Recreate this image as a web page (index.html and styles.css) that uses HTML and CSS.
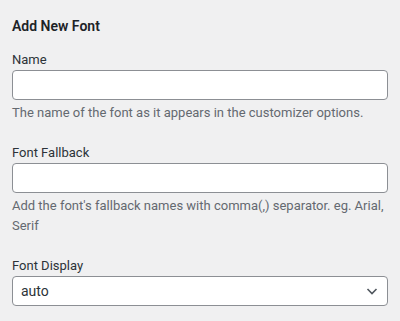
FILE: index.html
```html
<!DOCTYPE html>
<html>
    <head>
        <meta charset="utf-8" />
        <title>Add New Font</title>
        <link rel="stylesheet" href="styles.css">
    </head>
    <body>
        <div class="panel">
            <h3 class="panel-title">Add New Font</h3>

            <!-- Name -->
            <div class="field">
                <label for="font-name">Name</label>
                <input type="text" id="font-name" class="text-input">
                <p class="description">The name of the font as it appears in the customizer options.</p>
            </div>

            <!-- Fallback -->
            <div class="field">
                <label for="font-fallback">Font Fallback</label>
                <input type="text" id="font-fallback" class="text-input">
                <p class="description">Add the font's fallback names with comma(,) separator. eg. Arial, Serif</p>
            </div>

            <!-- Display -->
            <div class="field">
                <label for="font-display">Font Display</label>
                <div class="select-wrap">
                    <select id="font-display" class="select-input">
                        <option>auto</option>
                        <option>block</option>
                        <option>swap</option>
                        <option>fallback</option>
                        <option>optional</option>
                    </select>
                    <svg class="select-arrow" width="16" height="16" viewBox="0 0 16 16">
                        <path d="M3.5 6 L8 10.5 L12.5 6" fill="none" stroke="#50575e" stroke-width="1.6"/>
                    </svg>
                </div>
            </div>
        </div>
    </body>
</html>
```

FILE: styles.css
```css
body {
    margin: 0;
    background-color: #f0f0f1;
    font-family: Roboto, "Liberation Sans", sans-serif;
    color: #1d2327;
}

.panel {
    padding: 14px 12px;
}

/* title */
.panel-title {
    margin: 0 0 12px;
    font-size: 14px;
    font-weight: 600;
    line-height: 24px;
}

.field {
    margin-bottom: 20px;
}

.field label {
    display: block;
    font-size: 13px;
    font-weight: 400;
    line-height: 20px;
    color: #2c3338;
}

.text-input,
.select-input {
    display: block;
    width: 100%;
    height: 30px;
    margin: 0;
    padding: 0 8px;
    box-sizing: border-box;
    background-color: #fff;
    border: 1px solid #8c8f94;
    border-radius: 4px;
    font-family: inherit;
    font-size: 14px;
    color: #2c3338;
}

.description {
    margin: 3px 0 0;
    font-size: 13px;
    line-height: 20px;
    color: #646970;
}

.select-wrap {
    position: relative;
}

.select-input {
    appearance: none;
    -webkit-appearance: none;
    padding-right: 24px;
}

.select-arrow {
    position: absolute;
    right: 8px;
    top: 7px;
    pointer-events: none;
}
```
